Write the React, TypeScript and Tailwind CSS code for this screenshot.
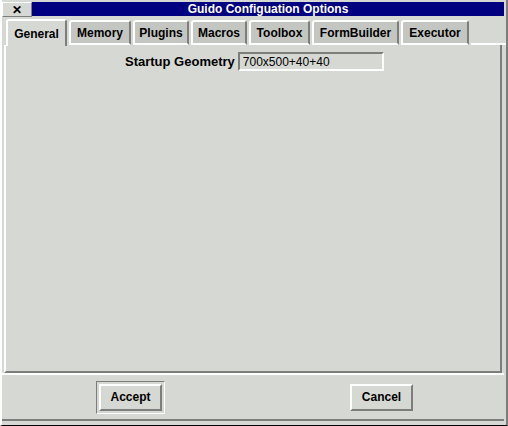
import React from "react";

const tabs = [
  { label: "General", w: "w-[61px]" },
  { label: "Memory", w: "w-[62px]" },
  { label: "Plugins", w: "w-[56px]" },
  { label: "Macros", w: "w-[56px]" },
  { label: "Toolbox", w: "w-[61px]" },
  { label: "FormBuilder", w: "w-[87px]" },
  { label: "Executor", w: "w-[68px]" },
];

export default function App() {
  return (
    <div
      className="w-[508px] h-[426px] bg-[#d6d8d3] text-black text-[12px] font-bold flex flex-col border-l-2 border-l-white border-r-2 border-r-[#7d7e7b] border-b border-b-black"
      style={{ fontFamily: '"Liberation Sans", Arial, sans-serif' }}
    >
      {/* Title bar */}
      <div className="flex h-[15px] mt-[2px] mr-[1px]">
        <div className="w-[30px] flex items-center justify-center bg-[#d6d8d3] border-t border-l border-white border-r border-b border-r-[#7d7e7b] border-b-[#7d7e7b]">
          <span className="text-[12px] leading-none font-black">✕</span>
        </div>
        <div className="flex-1 bg-[#000080] text-white flex items-center justify-center leading-none border-r border-b border-[#d6d8d3]">
          Guido Configuation Options
        </div>
      </div>

      {/* Tabs */}
      <div className="flex items-end h-[28px] pl-[4px] gap-[2px]">
        {tabs.map((t, i) => (
          <div
            key={t.label}
            className={
              i === 0
                ? `${t.w} h-[27px] flex items-center justify-center rounded-t-[3px] border-t-2 border-l-2 border-white border-r-2 border-r-[#7d7e7b] bg-[#d6d8d3] relative top-[1px]`
                : `${t.w} h-[25px] flex items-center justify-center rounded-t-[3px] border-t-2 border-l-2 border-white border-r-2 border-r-[#7d7e7b] bg-[#c4c6c1] border-b-2 border-b-white`
            }
          >
            {t.label}
          </div>
        ))}
        <div className="flex-1 border-b-2 border-white" />
      </div>

      {/* Panel */}
      <div className="flex-1 ml-[2px] mr-[4px] border-l-2 border-white border-r-2 border-r-[#7d7e7b] border-b-2 border-b-[#7d7e7b] pt-[7px] pl-[119px]">
        <div className="flex items-center gap-[3px]">
          <span className="text-[13px]">Startup Geometry</span>
          <div className="w-[146px] h-[19px] flex items-center pl-[3px] font-normal text-[12px] border-t-2 border-l-2 border-[#7d7e7b] border-r-2 border-b-2 border-r-white border-b-white">
            700x500+40+40
          </div>
        </div>
      </div>

      {/* Bottom buttons */}
      <div className="h-[48px] mr-[2px] mb-[4px] border-t-2 border-white border-b-2 border-b-[#7d7e7b] flex items-center">
        <div className="ml-[94px] p-[2px] border border-[#7d7e7b] border-r-white border-b-white">
          <div className="w-[63px] h-[27px] flex items-center justify-center border-t-2 border-l-2 border-white border-r-2 border-b-2 border-r-[#7d7e7b] border-b-[#7d7e7b]">
            Accept
          </div>
        </div>
        <div className="ml-[185px] w-[63px] h-[27px] flex items-center justify-center border-t-2 border-l-2 border-white border-r-2 border-b-2 border-r-[#7d7e7b] border-b-[#7d7e7b]">
          Cancel
        </div>
      </div>
    </div>
  );
}
